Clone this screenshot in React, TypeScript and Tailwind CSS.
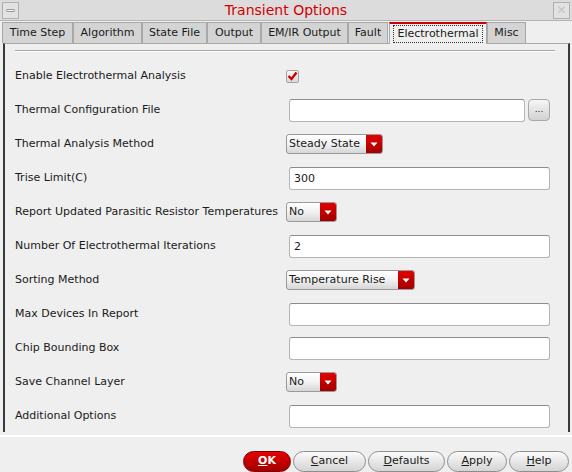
import React from "react";

const tabs = [
  { label: "Time Step", w: "w-[71px]" },
  { label: "Algorithm", w: "w-[69px]" },
  { label: "State File", w: "w-[65px]" },
  { label: "Output", w: "w-[54px]" },
  { label: "EM/IR Output", w: "w-[87px]" },
  { label: "Fault", w: "w-[40px]" },
];

const Arrow = () => (
  <svg width="8" height="5" viewBox="0 0 8 5">
    <path d="M0.5 0.5 L7.5 0.5 L4 4.5 Z" fill="#ffffff" />
  </svg>
);

const Combo = ({ value, w }: { value: string; w: string }) => (
  <div
    className={`${w} h-[20px] flex rounded-[3px] border border-[#9a9a9a] bg-gradient-to-b from-white via-[#f2f2f2] to-[#d6d6d6] overflow-hidden`}
  >
    <span className="flex-1 pl-[2px] leading-[18px] whitespace-nowrap">{value}</span>
    <span className="w-[16px] flex items-center justify-center bg-gradient-to-b from-[#e40000] to-[#a00000]">
      <Arrow />
    </span>
  </div>
);

const Field = ({ value = "", w = "w-[261px]" }: { value?: string; w?: string }) => (
  <div
    className={`${w} h-[23px] ml-[3px] bg-white border border-[#b4b4b4] border-t-[#8c8c8c] rounded-[3px] px-[4px] leading-[21px]`}
  >
    {value}
  </div>
);

const Row = ({ label, children }: { label: string; children?: React.ReactNode }) => (
  <div className="h-[34px] flex items-center">
    <div className="w-[271px] whitespace-nowrap">{label}</div>
    <div className="flex items-center">{children}</div>
  </div>
);

const Btn = ({ first, rest, w }: { first: string; rest: string; w: string }) => (
  <div
    className={`${w} h-[21px] rounded-full border border-[#8e8e8e] bg-gradient-to-b from-[#fbfbfb] to-[#d4d4d4] flex items-center justify-center`}
  >
    <span>
      <span className="underline">{first}</span>
      {rest}
    </span>
  </div>
);

export default function App() {
  return (
    <div className="w-[572px] h-[472px] bg-[#efefef] flex flex-col overflow-hidden text-[11px] text-[#1a1a1a] font-['DejaVu_Sans',sans-serif]">
      {/* Title bar */}
      <div className="h-[21px] bg-[#dcdcdc] border-b border-[#b4b4b4] flex items-center px-[2px]">
        <div className="w-[17px] h-[17px] border border-[#b0b0b0] bg-[#e2e2e2] flex items-center justify-center">
          <div className="w-[9px] h-[3px] border border-[#9c9c9c] bg-[#f4f4f4] rounded-[1px]" />
        </div>
        <div className="flex-1 text-center text-[14px] text-[#d40000] leading-[20px]">Transient Options</div>
        <div className="w-[17px] h-[17px] border border-[#b0b0b0] bg-[#e2e2e2] flex items-center justify-center text-[#c4c4c4] text-[12px] leading-none">
          ✕
        </div>
      </div>

      {/* Tabs */}
      <div className="h-[22px] flex items-end pl-[2px] relative z-10">
        {tabs.map((t) => (
          <div
            key={t.label}
            className={`${t.w} h-[21px] pt-[1px] bg-[#d4d4d4] border border-b-0 border-[#a8a8a8] flex items-center justify-center`}
          >
            {t.label}
          </div>
        ))}
        <div className="w-[98px] h-[22px] ml-[1px] -mb-px bg-[#efefef] border-t-2 border-[#cc0000] border-x border-x-[#a8a8a8] flex items-center justify-center">
          <span className="border border-dotted border-[#333] px-[3px] leading-[16px]">Electrothermal</span>
        </div>
        <div className="w-[39px] h-[21px] pt-[1px] bg-[#d4d4d4] border border-b-0 border-[#a8a8a8] flex items-center justify-center">
          Misc
        </div>
      </div>

      {/* Panel */}
      <div className="h-[389px] ml-[3px] mr-[2px] border-t border-[#a8a8a8] border-x-2 border-x-[#3a3a3a] pl-[10px]">
        <div className="mt-[6px] w-[540px] h-[2px] border-t border-[#a8a8a8] border-b border-b-white" />
        <div className="mt-[7px]">
          <Row label="Enable Electrothermal Analysis">
            <div className="w-[13px] h-[13px] border border-[#a4a4a4] rounded-[2px] bg-gradient-to-b from-[#f8f8f8] to-[#d8d8d8] flex items-center justify-center">
              <svg width="11" height="10" viewBox="0 0 11 10">
                <path d="M1.5 5 L4.5 8 L9.5 1.5" stroke="#d00000" strokeWidth="2.4" fill="none" />
              </svg>
            </div>
          </Row>
          <Row label="Thermal Configuration File">
            <Field w="w-[236px]" />
            <div className="w-[22px] h-[22px] ml-[3px] rounded-[4px] border border-[#a8a8a8] bg-gradient-to-b from-[#f6f6f6] to-[#d2d2d2] flex items-center justify-center text-[9px] leading-none pb-[2px]">
              ...
            </div>
          </Row>
          <Row label="Thermal Analysis Method">
            <Combo value="Steady State" w="w-[97px]" />
          </Row>
          <Row label="Trise Limit(C)">
            <Field value="300" />
          </Row>
          <Row label="Report Updated Parasitic Resistor Temperatures">
            <Combo value="No" w="w-[51px]" />
          </Row>
          <Row label="Number Of Electrothermal Iterations">
            <Field value="2" />
          </Row>
          <Row label="Sorting Method">
            <Combo value="Temperature Rise" w="w-[129px]" />
          </Row>
          <Row label="Max Devices In Report">
            <Field />
          </Row>
          <Row label="Chip Bounding Box">
            <Field />
          </Row>
          <Row label="Save Channel Layer">
            <Combo value="No" w="w-[51px]" />
          </Row>
          <Row label="Additional Options">
            <Field />
          </Row>
        </div>
      </div>

      {/* Bottom */}
      <div className="flex-1 pt-[3px]">
        <div className="h-[2px] bg-white" />
        <div className="mt-[14px] flex justify-end gap-[2px] pr-[3px]">
          <div className="w-[48px] h-[21px] rounded-full border border-[#7a0000] bg-gradient-to-b from-[#e80000] to-[#a00000] flex items-center justify-center text-white font-bold">
            <span>
              <span className="underline">O</span>K
            </span>
          </div>
          <Btn first="C" rest="ancel" w="w-[73px]" />
          <Btn first="D" rest="efaults" w="w-[77px]" />
          <Btn first="A" rest="pply" w="w-[60px]" />
          <Btn first="H" rest="elp" w="w-[60px]" />
        </div>
      </div>
    </div>
  );
}
